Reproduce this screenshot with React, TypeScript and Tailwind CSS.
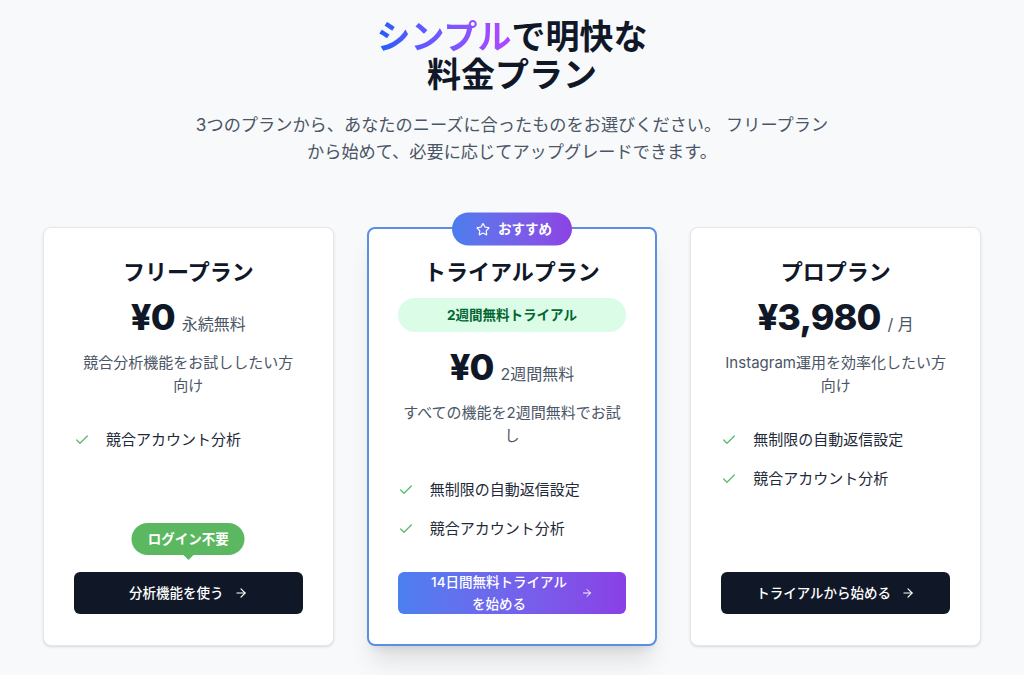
import React from "react";
import { Check, ArrowRight, Star } from "lucide-react";

type Plan = {
  name: string;
  price: string;
  unit: string;
  desc: string[];
  features: string[];
};

const free: Plan = {
  name: "フリープラン",
  price: "¥0",
  unit: "永続無料",
  desc: ["競合分析機能をお試ししたい方", "向け"],
  features: ["競合アカウント分析"],
};

const trial: Plan = {
  name: "トライアルプラン",
  price: "¥0",
  unit: "2週間無料",
  desc: ["すべての機能を2週間無料でお試", "し"],
  features: ["無制限の自動返信設定", "競合アカウント分析"],
};

const pro: Plan = {
  name: "プロプラン",
  price: "¥3,980",
  unit: "/ 月",
  desc: ["Instagram運用を効率化したい方", "向け"],
  features: ["無制限の自動返信設定", "競合アカウント分析"],
};

function PlanBody({ plan, pill }: { plan: Plan; pill?: string }) {
  return (
    <>
      <h3 className="text-[22px] leading-[30px] font-bold text-gray-900">{plan.name}</h3>
      {pill && (
        <div className="mt-[11px] flex h-[34px] items-center justify-center rounded-full bg-green-100 text-[13.5px] font-bold text-green-800">
          {pill}
        </div>
      )}
      <div className={`${pill ? "mt-[15px]" : "mt-[10px]"} flex items-baseline justify-center gap-[7px]`}>
        <span className="text-[36px] leading-[40px] font-extrabold tracking-tight text-gray-900">{plan.price}</span>
        <span className="text-[16px] text-gray-600">{plan.unit}</span>
      </div>
      <p className="mt-[14px] text-[15px] leading-[23px] whitespace-nowrap text-gray-600">
        {plan.desc[0]}
        <br />
        {plan.desc[1]}
      </p>
      <ul className="mt-[31px] space-y-[16px] text-left">
        {plan.features.map((f) => (
          <li key={f} className="flex items-center gap-[16px] text-[15px] leading-[23px] text-gray-800">
            <Check size={16} strokeWidth={2} className="shrink-0 text-[#5dba72]" />
            {f}
          </li>
        ))}
      </ul>
    </>
  );
}

export default function App() {
  return (
    <div className="min-h-screen bg-[#f8f9fb] font-['Inter','Noto_Sans_CJK_JP',sans-serif]">
      <div className="mx-auto w-[938px] pt-[18px]">
        <div className="text-center">
          <h2 className="text-[34px] leading-[38px] font-bold text-gray-900">
            <span className="bg-linear-to-r from-blue-600 to-purple-500 bg-clip-text text-transparent">シンプル</span>
            で明快な
            <br />
            料金プラン
          </h2>
          <p className="mt-[17px] text-[17.2px] leading-[27px] text-gray-600">
            3つのプランから、あなたのニーズに合ったものをお選びください。 フリープラン
            <br />
            から始めて、必要に応じてアップグレードできます。
          </p>
        </div>

        <div className="mt-[62px] grid grid-cols-3 gap-[33px]">
          <div className="flex flex-col rounded-lg border border-gray-200 bg-white px-[30px] pt-[29px] pb-[31px] text-center shadow-sm">
            <PlanBody plan={free} />
            <div className="relative mt-auto">
              <div className="absolute bottom-full left-1/2 mb-[17px] -translate-x-1/2">
                <div className="rounded-full bg-[#5cb860] px-[16px] py-[6px] text-[13.5px] leading-[20px] font-bold whitespace-nowrap text-white">
                  ログイン不要
                </div>
                <div className="absolute top-full left-1/2 h-0 w-0 -translate-x-1/2 border-x-[5px] border-t-[5px] border-x-transparent border-t-[#5cb860]" />
              </div>
              <button className="flex h-[42px] w-full items-center justify-center gap-[10px] rounded-md bg-gray-900 text-[13.5px] font-medium text-white">
                分析機能を使う
                <ArrowRight size={14} />
              </button>
            </div>
          </div>

          <div className="relative flex flex-col rounded-lg border-2 border-[#5b8fe3] bg-white px-[29px] pt-[28px] pb-[30px] text-center shadow-xl">
            <div className="absolute top-0 left-1/2 flex h-[33px] -translate-x-1/2 -translate-y-1/2 items-center gap-[8px] rounded-full bg-linear-to-r from-[#4a7ded] to-[#8c42e4] pr-[20px] pl-[24px] text-[13.5px] font-bold whitespace-nowrap text-white">
              <Star size={14} strokeWidth={2} />
              おすすめ
            </div>
            <PlanBody plan={trial} pill="2週間無料トライアル" />
            <button className="mt-[32px] flex h-[42px] w-full items-center justify-center gap-[14px] rounded-md bg-linear-to-r from-[#4a7ff0] to-[#8a3fe6] text-[13.5px] leading-[22px] font-medium text-white">
              <span className="text-center">
                14日間無料トライアル
                <br />
                を始める
              </span>
              <ArrowRight size={12} />
            </button>
          </div>

          <div className="flex flex-col rounded-lg border border-gray-200 bg-white px-[30px] pt-[29px] pb-[31px] text-center shadow-sm">
            <PlanBody plan={pro} />
            <button className="mt-auto flex h-[42px] w-full items-center justify-center gap-[10px] rounded-md bg-gray-900 text-[13.5px] font-medium text-white">
              トライアルから始める
              <ArrowRight size={14} />
            </button>
          </div>
        </div>
      </div>
    </div>
  );
}
